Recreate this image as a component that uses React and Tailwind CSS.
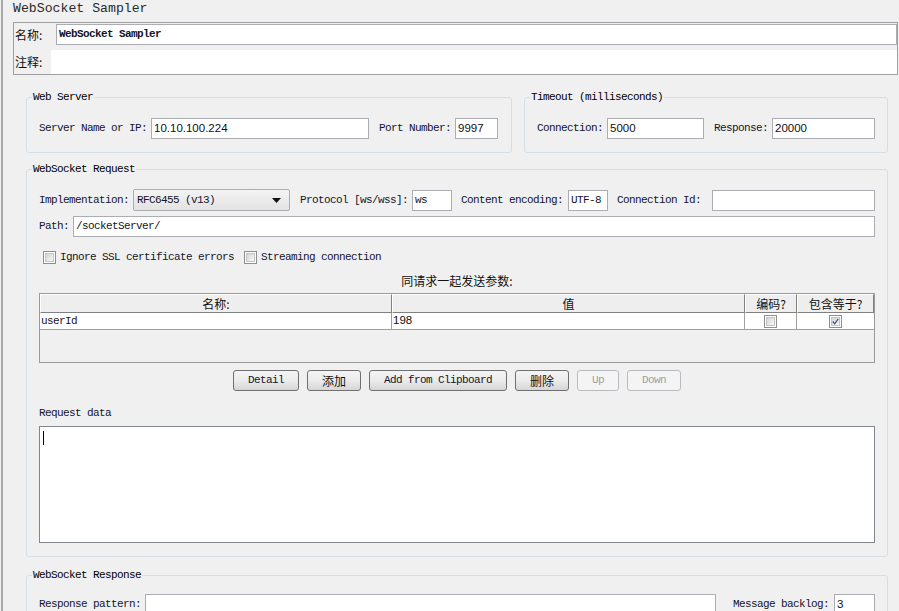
import React from "react";

const mono = "font-['Liberation_Mono',monospace] text-[11px] tracking-[-0.6px] text-[#14142a]";
const cjk = "font-['Noto_Sans_CJK_SC',sans-serif] text-[12px] text-[#111]";
const sans = "font-['Liberation_Sans',sans-serif] text-[11.5px] text-[#111]";

function Input({ w, children, font = sans, className = "" }) {
  return (
    <div
      className={`h-[21px] border border-[#abadb3] bg-white flex items-center px-[2px] whitespace-nowrap overflow-hidden ${font} ${className}`}
      style={w ? { width: w } : undefined}
    >
      {children}
    </div>
  );
}

function Label({ w, children, className = "" }) {
  return (
    <div className={`shrink-0 whitespace-nowrap ${mono} ${className}`} style={{ width: w }}>
      {children}
    </div>
  );
}

function Fieldset({ legend, className = "", inner = "", children }) {
  return (
    <fieldset className={`border border-[#d5dfe5] rounded-[3px] px-0 shrink-0 ${className}`}>
      <legend className={`ml-[5px] px-[1px] leading-[12px] ${mono} !text-[#000]`}>{legend}</legend>
      <div className={`px-[12px] ${inner}`}>{children}</div>
    </fieldset>
  );
}

function Checkbox({ checked = false }) {
  return (
    <div className="w-[13px] h-[13px] border border-[#8e8f8f] bg-white p-[1px] shrink-0">
      <div className="w-full h-full bg-gradient-to-br from-[#d4d4d4] to-[#f8f8f8] border border-[#c4c4c4] flex items-center justify-center">
        {checked && (
          <svg width="9" height="9" viewBox="0 0 9 9">
            <path d="M1 4.5 L3.5 7.5 L8 1" stroke="#3d4f8f" strokeWidth="1.6" fill="none" />
          </svg>
        )}
      </div>
    </div>
  );
}

function Button({ w, children, disabled = false, font = mono }) {
  return (
    <div
      className={`h-[21px] rounded-[3px] border flex items-center justify-center ${font} ${
        disabled
          ? "border-[#b8bcc0] bg-[#f4f4f4] !text-[#a0a0a0]"
          : "border-[#707070] bg-gradient-to-b from-[#f4f4f4] via-[#ebebeb] to-[#d6d6d6]"
      }`}
      style={{ width: w }}
    >
      {children}
    </div>
  );
}

export default function App() {
  return (
    <div className="w-[899px] h-[611px] overflow-hidden bg-[#f0f0f0] flex">
      <div className="w-[1px] shrink-0" />
      <div className="w-[2px] shrink-0 bg-[#a8a8a8]" />
      <div className="flex-1 flex flex-col">
        {/* Title */}
        <div className="shrink-0 pl-[10px] h-[18px] leading-[18px] font-['Liberation_Mono',monospace] text-[13.2px] text-[#2a2a2a] whitespace-nowrap">
          WebSocket Sampler
        </div>

        {/* Name / comment box */}
        <div className="shrink-0 mt-[4px] ml-[10px] mr-[1px] h-[53px] border border-[#a0a0a0] flex flex-col">
          <div className="flex items-center h-[22px] pt-[1px]">
            <div className={`w-[42px] pl-[1px] ${cjk}`}>名称:</div>
            <Input className="flex-1" font={`${mono} font-bold`}>WebSocket Sampler</Input>
          </div>
          <div className="flex mt-[5px] flex-1">
            <div className={`w-[37px] pl-[1px] flex items-center ${cjk}`}>注释:</div>
            <div className="flex-1 bg-white" />
          </div>
        </div>

        {/* Web server + timeout */}
        <div className="shrink-0 mt-[16px] ml-[23px] mr-[11px] flex gap-[12px]">
          <Fieldset legend="Web Server" className="w-[486px]" inner="pt-[15px] pb-[13px]">
            <div className="flex items-center h-[21px]">
              <Label w={112}>Server Name or IP:</Label>
              <Input w={218}>10.10.100.224</Input>
              <Label w={76} className="ml-[10px]">Port Number:</Label>
              <Input w={43}>9997</Input>
            </div>
          </Fieldset>
          <Fieldset legend="Timeout (milliseconds)" className="flex-1" inner="pt-[15px] pb-[13px]">
            <div className="flex items-center h-[21px]">
              <Label w={70}>Connection:</Label>
              <Input w={97}>5000</Input>
              <Label w={58} className="ml-[10px]">Response:</Label>
              <Input w={103}>20000</Input>
            </div>
          </Fieldset>
        </div>

        {/* WebSocket Request */}
        <div className="shrink-0 mt-[10px] ml-[23px] mr-[11px]">
          <Fieldset legend="WebSocket Request" inner="pt-[14px] pb-[13px]">
            <div className="flex items-center h-[22px]">
              <Label w={94}>Implementation:</Label>
              <div className="w-[157px] h-[22px] border border-[#acacac] rounded-[2px] bg-gradient-to-b from-[#f4f4f4] to-[#e2e2e2] flex items-center pl-[3px] pr-[8px]">
                <span className={`flex-1 ${mono}`}>RFC6455 (v13)</span>
                <svg width="9" height="5" viewBox="0 0 9 5">
                  <path d="M0 0 L9 0 L4.5 5 Z" fill="#111" />
                </svg>
              </div>
              <Label w={112} className="ml-[10px]">Protocol [ws/wss]:</Label>
              <Input w={40} font={mono}>ws</Input>
              <Label w={107} className="ml-[9px]">Content encoding:</Label>
              <Input w={40} font={mono}>UTF-8</Input>
              <Label w={95} className="ml-[9px]">Connection Id:</Label>
              <Input className="flex-1" />
            </div>
            <div className="flex items-center h-[21px] mt-[5px]">
              <Label w={34}>Path:</Label>
              <Input className="flex-1" font={mono}>/socketServer/</Input>
            </div>
            <div className="flex items-center h-[13px] mt-[14px] pl-[4px]">
              <Checkbox />
              <Label w={184} className="ml-[4px]">Ignore SSL certificate errors</Label>
              <Checkbox />
              <Label w={140} className="ml-[4px]">Streaming connection</Label>
            </div>
            <div className={`mt-[10px] h-[14px] leading-[14px] text-center ${cjk}`}>同请求一起发送参数:</div>

            {/* table */}
            <div className="mt-[5px] h-[70px] border border-[#9a9a9a] flex flex-col">
              <div className="flex h-[19px]">
                {[
                  ["名称:", 352],
                  ["值", 353],
                  ["编码?", 52],
                  ["包含等于?", null],
                ].map(([t, w], i) => (
                  <div
                    key={i}
                    className={`h-[19px] border-t border-l border-t-white border-l-white border-r border-b border-r-[#808080] border-b-[#808080] bg-[#eeeeee] flex items-center justify-center ${cjk} ${
                      w ? "shrink-0" : "flex-1"
                    }`}
                    style={w ? { width: w } : undefined}
                  >
                    {t}
                  </div>
                ))}
              </div>
              <div className="flex h-[17px] bg-white border-b border-[#a0a0a0]">
                <div className={`w-[352px] shrink-0 border-r border-[#a0a0a0] flex items-center pl-[1px] ${mono}`}>userId</div>
                <div className={`w-[353px] shrink-0 border-r border-[#a0a0a0] flex items-center pl-[1px] ${sans}`}>198</div>
                <div className="w-[52px] shrink-0 border-r border-[#a0a0a0] flex items-center justify-center">
                  <Checkbox />
                </div>
                <div className="flex-1 flex items-center justify-center">
                  <Checkbox checked />
                </div>
              </div>
            </div>

            {/* buttons */}
            <div className="mt-[7px] flex justify-center gap-[8px]">
              <Button w={66}>Detail</Button>
              <Button w={54} font={cjk}>添加</Button>
              <Button w={138}>Add from Clipboard</Button>
              <Button w={54} font={cjk}>删除</Button>
              <Button w={42} disabled>Up</Button>
              <Button w={54} disabled>Down</Button>
            </div>

            <div className={`mt-[15px] h-[14px] leading-[14px] ${mono}`}>Request data</div>
            <div className="mt-[6px] h-[117px] border border-[#82868f] bg-white pl-[3px] pt-[4px]">
              <div className="w-[1px] h-[14px] bg-black" />
            </div>
          </Fieldset>
        </div>

        {/* WebSocket Response */}
        <div className="shrink-0 mt-[12px] ml-[23px] mr-[11px]">
          <Fieldset legend="WebSocket Response" inner="pt-[13px] pb-[13px]">
            <div className="flex items-center h-[21px]">
              <Label w={106}>Response pattern:</Label>
              <Input w={571} />
              <Label w={101} className="ml-[17px]">Message backlog:</Label>
              <Input className="flex-1">3</Input>
            </div>
          </Fieldset>
        </div>
      </div>
    </div>
  );
}
